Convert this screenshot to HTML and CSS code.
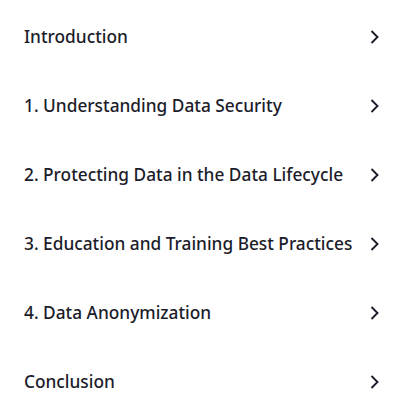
FILE: index.html
```html
<!DOCTYPE html>
<html lang="en">
<head>
<meta charset="utf-8">
<title>Contents</title>
<link rel="stylesheet" href="styles.css">
</head>
<body>
<nav class="toc">
  <a class="toc-item" href="#intro"><span class="toc-label">Introduction</span><svg class="chev" viewBox="0 0 9 14"><polyline points="1.5,1 7.5,7 1.5,13"/></svg></a>
  <a class="toc-item" href="#s1"><span class="toc-label">1. Understanding Data Security</span><svg class="chev" viewBox="0 0 9 14"><polyline points="1.5,1 7.5,7 1.5,13"/></svg></a>
  <a class="toc-item" href="#s2"><span class="toc-label">2. Protecting Data in the Data Lifecycle</span><svg class="chev" viewBox="0 0 9 14"><polyline points="1.5,1 7.5,7 1.5,13"/></svg></a>
  <a class="toc-item" href="#s3"><span class="toc-label">3. Education and Training Best Practices</span><svg class="chev" viewBox="0 0 9 14"><polyline points="1.5,1 7.5,7 1.5,13"/></svg></a>
  <a class="toc-item" href="#s4"><span class="toc-label">4. Data Anonymization</span><svg class="chev" viewBox="0 0 9 14"><polyline points="1.5,1 7.5,7 1.5,13"/></svg></a>
  <a class="toc-item" href="#end"><span class="toc-label">Conclusion</span><svg class="chev" viewBox="0 0 9 14"><polyline points="1.5,1 7.5,7 1.5,13"/></svg></a>
</nav>
</body>
</html>
```

FILE: styles.css
```css
html, body {
  margin: 0;
  padding: 0;
  background: #ffffff;
}

.toc {
  display: flex;
  flex-direction: column;
  padding: 2px 31px 0 24px;
  font-family: "Noto Sans", "Open Sans", sans-serif;
}

.toc-item {
  display: flex;
  align-items: center;
  justify-content: space-between;
  height: 69px;
  color: #1c1c2a;
  text-decoration: none;
  font-size: 17.3px;
  font-weight: 500;
}

.toc-label {
  white-space: nowrap;
}

.chev {
  width: 9px;
  height: 14px;
  flex: none;
}

.chev polyline {
  fill: none;
  stroke: #1c1c2a;
  stroke-width: 1.9;
  stroke-linecap: butt;
  stroke-linejoin: miter;
}
```
